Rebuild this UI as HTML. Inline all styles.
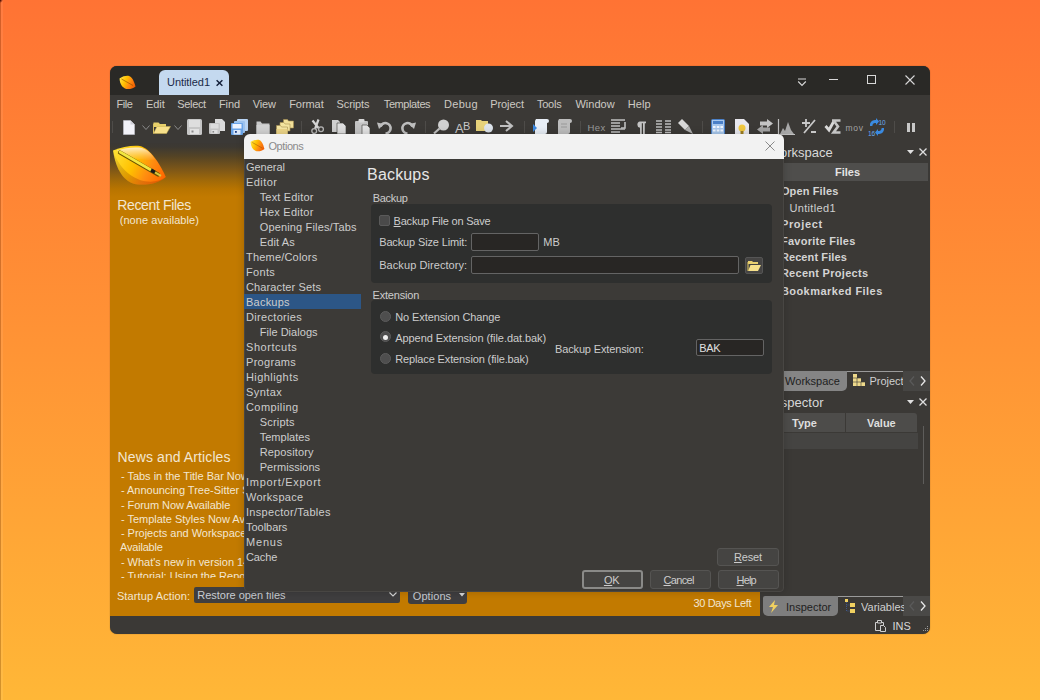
<!DOCTYPE html>
<html><head><meta charset="utf-8">
<style>
*{margin:0;padding:0;box-sizing:border-box}
html,body{width:1040px;height:700px;overflow:hidden}
body{background:linear-gradient(180deg,#ff7334 0%,#ff9435 50%,#ffb737 100%);font-family:"Liberation Sans",sans-serif;position:relative}
.a{position:absolute}
.t{position:absolute;white-space:nowrap;line-height:1}
svg{position:absolute;overflow:visible}
u{text-decoration:underline;text-underline-offset:1px}
</style></head><body>

<div class="a" style="left:0px;top:0px;width:1px;height:700px;background:rgba(60,20,0,0.22)"></div>
<div class="a" style="left:1px;top:0px;width:2px;height:700px;background:rgba(255,255,255,0.07)"></div>
<div class="a" style="left:0px;top:0px;width:3px;height:3px;background:radial-gradient(circle at 0 0,#300 0,rgba(60,0,0,0) 3px)"></div>
<div class="a" style="left:110px;top:66px;width:820px;height:567.5px;background:#3b3936;border-radius:7px;box-shadow:0 0 1px rgba(0,0,0,0.5)"></div>
<div class="a" style="left:110px;top:66px;width:820px;height:29px;background:#2a2926;border-radius:7px 7px 0 0"></div>
<div class="a" style="left:159px;top:70px;width:70px;height:25px;background:#c4d9ef;border-radius:6px 6px 0 0"></div>
<svg style="left:216px;top:80px" width="7" height="6" viewBox="0 0 7 6"><path d="M0.6 0.3l5.8 5.4M6.4 0.3l-5.8 5.4" stroke="#14203a" stroke-width="1.5"/></svg>
<svg style="left:119px;top:75px" width="17" height="15" viewBox="0 0 17 15"><defs>
<linearGradient id="lg1" x1="0" y1="0.3" x2="1" y2="0.7"><stop offset="0" stop-color="#ffe040"/><stop offset="0.35" stop-color="#ffc000"/><stop offset="0.65" stop-color="#ff8a10"/><stop offset="1" stop-color="#f05a00"/></linearGradient></defs>
<path d="M0.5 3.5 C4 1 8 0.5 10 1 C13 2 15 6 16.5 11.5 C13 14.5 8 14.5 6 13.5 C3 12 1 9 0.5 3.5Z" fill="url(#lg1)"/><path d="M2.5 4 L14 10.5" stroke="#905000" stroke-width="0.9" opacity="0.7"/></svg>
<svg style="left:797px;top:76px" width="10" height="11" viewBox="0 0 10 11"><path d="M1 3h8M1.2 5.5l3.8 4 3.8-4" stroke="#d8d8d8" stroke-width="1.1" fill="none"/></svg>
<div class="a" style="left:829px;top:79px;width:9px;height:1px;background:#d8d8d8"></div>
<div class="a" style="left:867px;top:75px;width:9px;height:9px;border:1px solid #d8d8d8"></div>
<svg style="left:905px;top:75px" width="10" height="10" viewBox="0 0 10 10"><path d="M0.5 0.5l9 9M9.5 0.5l-9 9" stroke="#d8d8d8" stroke-width="1.1"/></svg>
<div class="a" style="left:112px;top:121px;width:1px;height:12px;background:#4e4c49"></div>
<svg style="left:123px;top:120px" width="12" height="15" viewBox="0 0 12 15"><path d="M0.5 0.5h7l4 4v10h-11z" fill="#f2f2f8" stroke="#c8c8d0" stroke-width="0.6"/><path d="M7.5 0.5v4h4" fill="#d0d0d8"/></svg>
<svg style="left:142px;top:125px" width="8" height="6" viewBox="0 0 8 6"><path d="M0.5 0.5l3.5 4 3.5-4" stroke="#8a8a8a" fill="none" stroke-width="1"/></svg>
<svg style="left:153px;top:121px" width="18" height="13" viewBox="0 0 18 13"><path d="M0.5 1.5h5l1.5 1.5h6v3h-13z" fill="#e6cf6a"/><path d="M0.5 12.5l3.5-7h13.5l-4 7z" fill="#f7e08a" stroke="#c9b050" stroke-width="0.5"/><path d="M0.5 3v9.5" stroke="#d8c060"/></svg>
<svg style="left:174px;top:125px" width="8" height="6" viewBox="0 0 8 6"><path d="M0.5 0.5l3.5 4 3.5-4" stroke="#8a8a8a" fill="none" stroke-width="1"/></svg>
<svg style="left:187px;top:119px" width="15" height="16" viewBox="0 0 15 16"><rect x="0" y="0" width="15" height="16" rx="1.5" fill="#c6c6c6"/><rect x="2" y="1" width="11" height="7" fill="#dedede"/><rect x="3" y="10" width="9" height="5" fill="#e2e2e2"/><rect x="4.5" y="11.5" width="2" height="2" fill="#8a8a8a"/></svg>
<svg style="left:209px;top:119px" width="16" height="15" viewBox="0 0 16 15"><path d="M6 0h7l3 3v9h-10z" fill="#dadada"/><rect x="0" y="4" width="11" height="11" rx="1" fill="#c4c4c4"/><rect x="1.5" y="5" width="8" height="4.5" fill="#dcdcdc"/><rect x="2.5" y="11" width="6" height="3.5" fill="#e0e0e0"/><rect x="3.5" y="12" width="1.6" height="1.6" fill="#888"/></svg>
<svg style="left:231px;top:119px" width="17" height="16" viewBox="0 0 17 16"><rect x="6" y="0" width="11" height="12" rx="1" fill="#b8d4f4"/><rect x="3" y="2" width="11" height="12" rx="1" fill="#9cc2ee"/><rect x="0" y="4" width="12" height="12" rx="1" fill="#6aa4e8"/><rect x="1.5" y="5" width="9" height="4.5" fill="#eef4ff"/><rect x="2.5" y="11" width="7" height="4.5" fill="#dce8f8"/><rect x="4" y="12" width="1.8" height="1.8" fill="#1a3a80"/></svg>
<svg style="left:256px;top:121px" width="14" height="14" viewBox="0 0 14 14"><path d="M0.5 0.5h4l1.5 2h7.5v11h-13z" fill="#c8c8c8"/><rect x="0.5" y="4" width="13" height="9.5" fill="#d2d2d2"/></svg>
<svg style="left:276px;top:119px" width="18" height="16" viewBox="0 0 18 16"><path d="M7.5 0.5h4l1 1.5h5v7h-10z" fill="#f2e09a" stroke="#a89050" stroke-width="0.6"/><path d="M4 3.5h4l1 1.5h5v7h-10z" fill="#f4e4a0" stroke="#a89050" stroke-width="0.6"/><path d="M0.5 6.5h4l1 1.5h6v7.5h-11z" fill="#f6e6a4" stroke="#a89050" stroke-width="0.6"/><path d="M0.5 10h11v5.5h-11z" fill="#eed688"/></svg>
<div class="a" style="left:301px;top:121px;width:1px;height:12px;background:#4e4c49"></div>
<svg style="left:310px;top:119px" width="14" height="15" viewBox="0 0 14 15"><path d="M8.5 0.5l-3.5 9.5M2.5 1.5l6 7.5" stroke="#d4d4d4" stroke-width="2.2"/><circle cx="4.2" cy="12" r="2.4" fill="none" stroke="#b8b8b8" stroke-width="1.3"/><circle cx="11" cy="10.2" r="2.4" fill="none" stroke="#b8b8b8" stroke-width="1.3"/></svg>
<svg style="left:332px;top:120px" width="15" height="14" viewBox="0 0 15 14"><path d="M0 0h6l2 2v10h-8z" fill="#cfcfcf"/><path d="M5 3h6l3 3v8h-9z" fill="#dedede" stroke="#3b3936" stroke-width="0.6"/></svg>
<svg style="left:355px;top:119px" width="15" height="16" viewBox="0 0 15 16"><rect x="0" y="2" width="13" height="14" rx="1" fill="#c4c4c4"/><rect x="3.5" y="0" width="6" height="3.5" rx="1" fill="#d8d8d8"/><path d="M7 6h5l3 3v7h-8z" fill="#e2e2e2" stroke="#3b3936" stroke-width="0.6"/></svg>
<svg style="left:377px;top:120px" width="16" height="15" viewBox="0 0 16 15"><path d="M3.5 6.5 A5.2 5.2 0 1 1 8.5 13.5" stroke="#bdbdbd" stroke-width="2.6" fill="none"/><path d="M0 2.5l7 1.5-5 5z" fill="#bdbdbd"/></svg>
<svg style="left:400px;top:120px" width="16" height="15" viewBox="0 0 16 15"><path d="M12.5 6.5 A5.2 5.2 0 1 0 7.5 13.5" stroke="#bdbdbd" stroke-width="2.6" fill="none"/><path d="M16 2.5l-7 1.5 5 5z" fill="#bdbdbd"/></svg>
<div class="a" style="left:425px;top:121px;width:1px;height:12px;background:#4e4c49"></div>
<svg style="left:433px;top:119px" width="17" height="15" viewBox="0 0 17 15"><circle cx="10.5" cy="6" r="5.5" fill="#d0d0d0"/><path d="M6.5 9.5l-5.5 5" stroke="#c0c0c0" stroke-width="2.2"/></svg>
<svg style="left:455px;top:119px" width="17" height="15" viewBox="0 0 17 15"><text x="0" y="14" font-family="Liberation Sans" font-size="13" fill="#c8c8c8">A</text><text x="8" y="11" font-family="Liberation Sans" font-size="11" fill="#c8c8c8">B</text></svg>
<svg style="left:476px;top:119px" width="18" height="15" viewBox="0 0 18 15"><path d="M0 1h5l1 1h6v10h-12z" fill="#e6d27a"/><circle cx="12.5" cy="9" r="4.5" fill="#dde4ec"/></svg>
<svg style="left:500px;top:120px" width="14" height="12" viewBox="0 0 14 12"><path d="M0 6h11M6 1l6 5-6 5" stroke="#c0c0c0" stroke-width="2" fill="none"/></svg>
<div class="a" style="left:524px;top:121px;width:1px;height:12px;background:#4e4c49"></div>
<svg style="left:533px;top:119px" width="16" height="15" viewBox="0 0 16 15"><path d="M3 0h11a2 2 0 0 1 0 4v9a2 2 0 0 1-2 2h-10v-13z" fill="#e8eef6"/><path d="M0 5l4 4-4 4z" fill="#3a88e0"/></svg>
<svg style="left:557px;top:119px" width="15" height="15" viewBox="0 0 15 15"><path d="M2 0h11a2 2 0 0 1 0 4v9a2 2 0 0 1-2 2h-10v-13z" fill="#bdbdbd"/><path d="M4 5h6M4 8h6" stroke="#999" stroke-width="1"/></svg>
<div class="a" style="left:580px;top:121px;width:1px;height:12px;background:#4e4c49"></div>
<svg style="left:611px;top:119px" width="15" height="15" viewBox="0 0 15 15"><path d="M0 1h14M0 4h9M0 7h9M0 10h14M0 13h9" stroke="#c0c0c0" stroke-width="1.6"/><path d="M14 3v6h-4" stroke="#c0c0c0" stroke-width="1.6" fill="none"/></svg>
<svg style="left:635px;top:121px" width="11" height="13" viewBox="0 0 11 13"><path d="M5 0.5h6v1.8h-1.2v10.7h-1.8v-10.7h-1.2v10.7h-1.8v-6.2a3.2 3.2 0 0 1 0-6.3z" fill="#c4c4c4"/></svg>
<svg style="left:656px;top:120px" width="15" height="13" viewBox="0 0 15 13"><path d="M0 1h6M0 4h6M0 7h6M0 10h6M0 12.5h6M9 1h6M9 4h6M9 7h6M9 10h6M9 12.5h6" stroke="#bdbdbd" stroke-width="1.5"/></svg>
<svg style="left:677px;top:119px" width="16" height="15" viewBox="0 0 16 15"><path d="M1 4l4-4 7 7-4 4z" fill="#d8d8d8"/><path d="M8 11l4-4 4 8z" fill="#b0b0b0"/></svg>
<div class="a" style="left:702px;top:121px;width:1px;height:12px;background:#4e4c49"></div>
<svg style="left:711px;top:119px" width="14" height="16" viewBox="0 0 14 16"><rect x="0.5" y="0.5" width="13" height="15" rx="1" fill="#a8c8ec" stroke="#4a80c8"/><rect x="2" y="2" width="10" height="3" fill="#4a80c8"/><path d="M2 7h2.5v2h-2.5zM5.8 7h2.5v2h-2.5zM9.5 7h2.5v2h-2.5zM2 10.5h2.5v2h-2.5zM5.8 10.5h2.5v2h-2.5zM9.5 10.5h2.5v2h-2.5z" fill="#f0f6ff"/></svg>
<svg style="left:735px;top:119px" width="14" height="16" viewBox="0 0 14 16"><path d="M0 0h9l5 5v11h-14z" fill="#e8e8ee"/><circle cx="7" cy="9" r="3.5" fill="#f0c840"/><rect x="5.5" y="12" width="3" height="3" fill="#a08020"/></svg>
<svg style="left:757px;top:119px" width="16" height="15" viewBox="0 0 16 15"><path d="M3 2.5h7v-2.5l6 4.5-6 4.5v-2.5h-7z" fill="#c4c4c4"/><path d="M13 8.5h-7v-2.5l-6 4.5 6 4.5v-2.5h7z" fill="#a4a4a4"/></svg>
<svg style="left:778px;top:119px" width="17" height="16" viewBox="0 0 17 16"><path d="M0.5 0v15.5h16.5" stroke="#c0c0c0" stroke-width="1.2" fill="none"/><path d="M2 15l3-6 2 3 3-9 3 8 3 4z" fill="#a8a8a8"/></svg>
<svg style="left:802px;top:119px" width="15" height="15" viewBox="0 0 15 15"><path d="M4 0v8M0 4h8M2 14l11-13M9 13h5" stroke="#c8c8c8" stroke-width="1.8"/></svg>
<svg style="left:825px;top:119px" width="16" height="15" viewBox="0 0 16 15"><path d="M0.5 7l3.5 4 5-9" stroke="#d8d8d8" stroke-width="2.8" fill="none"/><path d="M7 1.5h8.5M8.5 1.5l4.5 6-4.5 6h7" stroke="#c4c4c4" stroke-width="2.6" fill="none"/></svg>
<svg style="left:868px;top:118px" width="18" height="18" viewBox="0 0 18 18"><path d="M2 8a5 5 0 0 1 5-6h1v-2l3 3.5-3 3.5v-2h-1a2.6 2.6 0 0 0-2.6 3z" fill="#3a8ae0"/><path d="M16 10a5 5 0 0 1-5 6h-1v2l-3-3.5 3-3.5v2h1a2.6 2.6 0 0 0 2.6-3z" fill="#3a8ae0"/><text x="10.5" y="6.5" font-family="Liberation Sans" font-size="6.5" fill="#6aaaf0">10</text><text x="0" y="17.5" font-family="Liberation Sans" font-size="6.5" fill="#6aaaf0">16</text></svg>
<div class="a" style="left:894px;top:121px;width:1px;height:12px;background:#4e4c49"></div>
<div class="a" style="left:907px;top:123px;width:3px;height:9px;background:#c8c8c8"></div>
<div class="a" style="left:912px;top:123px;width:3px;height:9px;background:#c8c8c8"></div>
<div class="a" style="left:110px;top:143px;width:650px;height:473px;background:linear-gradient(180deg,#3b3834 0px,#3d3932 4px,#564424 14px,#7c5618 26px,#a26a08 38px,#b87400 46px,#c27a00 54px,#c27a00 100%)"></div>
<svg style="left:112px;top:144px" width="56" height="44" viewBox="0 0 56 44"><defs>
<linearGradient id="lg2" x1="0" y1="0.3" x2="1" y2="0.7"><stop offset="0" stop-color="#ffe030"/><stop offset="0.4" stop-color="#ffc000"/><stop offset="0.7" stop-color="#ff8c10"/><stop offset="1" stop-color="#ff6800"/></linearGradient>
<linearGradient id="lg3" x1="0" y1="0" x2="0" y2="1"><stop offset="0" stop-color="#fff4e0" stop-opacity="0.9"/><stop offset="1" stop-color="#ffc890" stop-opacity="0.1"/></linearGradient>
<linearGradient id="lg4" x1="0" y1="0" x2="0" y2="1"><stop offset="0" stop-color="#000" stop-opacity="0"/><stop offset="1" stop-color="#b04000" stop-opacity="0.35"/></linearGradient></defs>
<path d="M1 6.5 C9 3 18 1.5 26 1.8 C36 2.5 46 16 53.8 33 C46 40 33 41.5 24 40.2 C12 38 4 26 1 6.5Z" fill="url(#lg2)"/>
<path d="M1 6.5 C12 38 40 43 53.8 33 C46 40 33 41.5 24 40.2 C12 38 4 26 1 6.5Z" fill="url(#lg4)"/>
<path d="M5 6.5 C12 4 20 3 27 3.5 C35 4.5 40 10 43 15.5 C30 17 15 14 5 6.5Z" fill="url(#lg3)"/>
<path d="M8 8.5 L46 30.5" stroke="#6a5200" stroke-width="4.2" stroke-linecap="round"/>
<path d="M8 8 L39 26" stroke="#f2e640" stroke-width="2.8" stroke-linecap="round"/>
<path d="M39 26 L43 28.3" stroke="#1a1a1a" stroke-width="3.2"/>
<path d="M43 28.3 L49 31.8" stroke="#d8c840" stroke-width="2"/>
</svg>
<div class="a" style="left:194px;top:587px;width:206px;height:16px;background:#3f3e3f;border-radius:2px"></div>
<svg style="left:389px;top:592px" width="8" height="5" viewBox="0 0 8 5"><path d="M0.5 0.5l3.5 3.5 3.5-3.5" stroke="#d8d8d8" fill="none" stroke-width="1.1"/></svg>
<div class="a" style="left:408px;top:587px;width:59px;height:17px;background:#3f3e40;border-radius:3px"></div>
<svg style="left:459px;top:593px" width="6" height="4" viewBox="0 0 6 4"><path d="M0 0h6l-3 3.5z" fill="#d8d8d8"/></svg>
<div class="a" style="left:760px;top:143px;width:170px;height:473px;background:#3b3936"></div>
<svg style="left:907px;top:150px" width="7" height="5" viewBox="0 0 7 5"><path d="M0 0h7l-3.5 4z" fill="#e0e0e0"/></svg>
<svg style="left:919px;top:148px" width="8" height="8" viewBox="0 0 8 8"><path d="M0.5 0.5l7 7M7.5 0.5l-7 7" stroke="#e0e0e0" stroke-width="1.3"/></svg>
<div class="a" style="left:760px;top:163px;width:168px;height:18px;background:#4f4e4c"></div>
<div class="a" style="left:760px;top:371px;width:170px;height:20px;background:#3b3936"></div>
<div class="a" style="left:847px;top:371px;width:56px;height:1px;background:#9a9a9a"></div>
<div class="a" style="left:760px;top:371px;width:87px;height:20px;background:#858585;border-radius:0 0 5px 0"></div>
<svg style="left:853px;top:374px" width="12" height="12" viewBox="0 0 12 12"><path d="M0 0h4v4h4v4h4v4h-12z" fill="#eed98a"/><path d="M0 4h12M0 8h12M4 4v8M8 8v4" stroke="#3b3936" stroke-width="0.6"/></svg>
<div class="a" style="left:903px;top:371px;width:27px;height:20px;background:#464543"></div>
<svg style="left:909px;top:376px" width="6" height="10" viewBox="0 0 6 10"><path d="M5 0.5l-4 4.5 4 4.5" stroke="#5a5a5a" stroke-width="1.3" fill="none"/></svg>
<svg style="left:920px;top:376px" width="6" height="10" viewBox="0 0 6 10"><path d="M1 0.5l4 4.5-4 4.5" stroke="#e8e8e8" stroke-width="1.3" fill="none"/></svg>
<svg style="left:907px;top:400px" width="7" height="5" viewBox="0 0 7 5"><path d="M0 0h7l-3.5 4z" fill="#e0e0e0"/></svg>
<svg style="left:919px;top:398px" width="8" height="8" viewBox="0 0 8 8"><path d="M0.5 0.5l7 7M7.5 0.5l-7 7" stroke="#e0e0e0" stroke-width="1.3"/></svg>
<div class="a" style="left:760px;top:413px;width:85px;height:19px;background:#4d4c4a;border-radius:0"></div>
<div class="a" style="left:846px;top:413px;width:71px;height:19px;background:#4d4c4a;border-radius:0 3px 0 0"></div>
<div class="a" style="left:760px;top:433px;width:158px;height:16px;background:#454442"></div>
<div class="a" style="left:923px;top:426px;width:1px;height:58px;background:#5e5d5b"></div>
<div class="a" style="left:760px;top:596px;width:170px;height:20px;background:#3b3936"></div>
<div class="a" style="left:838px;top:596px;width:65px;height:1px;background:#9a9a9a"></div>
<div class="a" style="left:763px;top:596px;width:75px;height:20px;background:#7e7e7e;border-radius:2px 0 5px 5px"></div>
<svg style="left:769px;top:600px" width="9" height="13" viewBox="0 0 9 13"><path d="M6 0l-6 7h4l-2 6 7-8h-4z" fill="#f0d060"/></svg>
<svg style="left:845px;top:599px" width="11" height="15" viewBox="0 0 11 15"><path d="M0 0h3v3h-3zM5 4h5v4h-5zM5 10h5v4h-5z" fill="#f0d060"/><path d="M1.5 3v9h3.5M1.5 6h3.5" stroke="#4060a0" stroke-width="0.8" stroke-dasharray="1 1" fill="none"/></svg>
<div class="a" style="left:903px;top:596px;width:27px;height:20px;background:#4a4947"></div>
<svg style="left:909px;top:601px" width="6" height="10" viewBox="0 0 6 10"><path d="M5 0.5l-4 4.5 4 4.5" stroke="#5a5a5a" stroke-width="1.3" fill="none"/></svg>
<svg style="left:920px;top:601px" width="6" height="10" viewBox="0 0 6 10"><path d="M1 0.5l4 4.5-4 4.5" stroke="#e8e8e8" stroke-width="1.3" fill="none"/></svg>
<svg style="left:875px;top:620px" width="12" height="12" viewBox="0 0 12 12"><path d="M0.5 2.5h8v8h-8z" fill="none" stroke="#d0d0d0"/><path d="M2.5 0.5h4v2.5h-4z" fill="#3b3936" stroke="#d0d0d0"/><path d="M5.5 5.5h3l2 2v4h-5z" fill="#3b3936" stroke="#d0d0d0"/></svg>
<svg style="left:922px;top:626px" width="7" height="7" viewBox="0 0 7 7"><path d="M5 0h1v1h-1zM3 2h1v1h-1zM5 2h1v1h-1zM1 4h1v1h-1zM3 4h1v1h-1zM5 4h1v1h-1z" fill="#9a9a9a"/></svg>
<div style="position:absolute;left:0;top:0;width:1040px;height:700px;z-index:10">
<div class="a" style="left:244px;top:134px;width:540px;height:458px;background:#3c3a37;border:1px solid #484643;border-radius:6px 6px 4px 4px;box-shadow:0 0 8px rgba(0,0,0,0.18)"></div>
<div class="a" style="left:244px;top:134px;width:540px;height:25px;background:#f2f2f2;border-radius:6px 6px 0 0"></div>
<svg style="left:250px;top:139px" width="15" height="13" viewBox="0 0 17 15"><path d="M0.5 3.5 C4 1 8 0.5 10 1 C13 2 15 6 16.5 11.5 C13 14.5 8 14.5 6 13.5 C3 12 1 9 0.5 3.5Z" fill="url(#lg1)"/><path d="M2.5 4 L14 10.5" stroke="#905000" stroke-width="0.9" opacity="0.6"/></svg>
<svg style="left:765px;top:141px" width="10" height="10" viewBox="0 0 10 10"><path d="M0.5 0.5l9 9M9.5 0.5l-9 9" stroke="#8a8a8a" stroke-width="1"/></svg>
<div class="a" style="left:244px;top:294px;width:117px;height:15px;background:#2c5686"></div>
<div class="a" style="left:371px;top:204px;width:401px;height:79px;background:#2e2f2e;border-radius:4px"></div>
<div class="a" style="left:379px;top:215px;width:11px;height:11px;background:#4a4a4a;border:1px solid #5a5a5a;border-radius:2px"></div>
<div class="a" style="left:471px;top:233px;width:68px;height:18px;background:#282624;border:1px solid #646464;border-radius:2px"></div>
<div class="a" style="left:471px;top:256px;width:268px;height:18px;background:#282624;border:1px solid #646464;border-radius:2px"></div>
<div class="a" style="left:745px;top:257px;width:18px;height:17px;background:#454443;border:1px solid #555;border-radius:2px"></div>
<svg style="left:748px;top:261px" width="13" height="10" viewBox="0 0 13 10"><path d="M0 0h4l1 1h5v2h-10z" fill="#e8d070"/><path d="M0 10l2.5-6h10.5l-3 6z" fill="#f6e08a"/><path d="M0 1v9" stroke="#e0c860"/></svg>
<div class="a" style="left:371px;top:300px;width:401px;height:74px;background:#2e2f2e;border-radius:4px"></div>
<div class="a" style="left:380px;top:311px;width:11px;height:11px;background:#4e4e4e;border:1px solid #5c5c5c;border-radius:50%"></div>
<div class="a" style="left:380px;top:331px;width:11px;height:11px;background:#4e4e4e;border:1px solid #5c5c5c;border-radius:50%"></div>
<div class="a" style="left:380px;top:353px;width:11px;height:11px;background:#4e4e4e;border:1px solid #5c5c5c;border-radius:50%"></div>
<div class="a" style="left:383px;top:335px;width:5px;height:5px;background:#f0f0f0;border-radius:50%"></div>
<div class="a" style="left:696px;top:339px;width:68px;height:17px;background:#282624;border:1px solid #646464;border-radius:2px"></div>
<div class="a" style="left:717px;top:548px;width:62px;height:18px;background:#454442;border:1px solid #555452;border-radius:3px"></div>
<div class="a" style="left:582px;top:570px;width:61px;height:19px;background:#454442;border:2px solid #8a8a88;border-radius:3px"></div>
<div class="a" style="left:650px;top:570px;width:61px;height:19px;background:#454442;border:1px solid #555452;border-radius:3px"></div>
<div class="a" style="left:718px;top:570px;width:61px;height:19px;background:#454442;border:1px solid #555452;border-radius:3px"></div>
</div>
<div style="position:absolute;left:0;top:0;width:1040px;height:578px;overflow:hidden;z-index:1">
<span class="t" id="n0" style="left:120.90px;top:470.99px;font-size:11px;color:#f3e6d0;letter-spacing:-0.010px;z-index:1;">- Tabs in the Title Bar Now Available</span>
<span class="t" id="n1" style="left:120.90px;top:485.26px;font-size:11px;color:#f3e6d0;letter-spacing:-0.010px;z-index:1;">- Announcing Tree-Sitter Syntax Highlighting</span>
<span class="t" id="n2" style="left:120.90px;top:499.53px;font-size:11px;color:#f3e6d0;letter-spacing:-0.050px;z-index:1;">- Forum Now Available</span>
<span class="t" id="n3" style="left:120.90px;top:513.80px;font-size:11px;color:#f3e6d0;letter-spacing:-0.010px;z-index:1;">- Template Styles Now Available</span>
<span class="t" id="n4" style="left:120.90px;top:528.07px;font-size:11px;color:#f3e6d0;letter-spacing:-0.010px;z-index:1;">- Projects and Workspaces Now</span>
<span class="t" id="n5" style="left:120.10px;top:542.34px;font-size:11px;color:#f3e6d0;letter-spacing:-0.215px;z-index:1;">Available</span>
<span class="t" id="n6" style="left:120.90px;top:556.61px;font-size:11px;color:#f3e6d0;letter-spacing:-0.010px;z-index:1;">- What's new in version 14</span>
<span class="t" id="n7" style="left:120.90px;top:570.88px;font-size:11px;color:#f3e6d0;letter-spacing:-0.010px;z-index:1;">- Tutorial: Using the Repository</span>
</div>
<span class="t" id="m0" style="left:116.40px;top:99.19px;font-size:11px;color:#cdc9c3;letter-spacing:-0.435px;z-index:1;">File</span>
<span class="t" id="m1" style="left:145.90px;top:99.19px;font-size:11px;color:#cdc9c3;letter-spacing:-0.034px;z-index:1;">Edit</span>
<span class="t" id="m2" style="left:177.30px;top:99.19px;font-size:11px;color:#cdc9c3;letter-spacing:-0.355px;z-index:1;">Select</span>
<span class="t" id="m3" style="left:219.00px;top:99.19px;font-size:11px;color:#cdc9c3;letter-spacing:-0.102px;z-index:1;">Find</span>
<span class="t" id="m4" style="left:252.70px;top:99.19px;font-size:11px;color:#cdc9c3;letter-spacing:-0.120px;z-index:1;">View</span>
<span class="t" id="m5" style="left:289.20px;top:99.19px;font-size:11px;color:#cdc9c3;letter-spacing:-0.057px;z-index:1;">Format</span>
<span class="t" id="m6" style="left:336.50px;top:99.19px;font-size:11px;color:#cdc9c3;letter-spacing:-0.089px;z-index:1;">Scripts</span>
<span class="t" id="m7" style="left:383.80px;top:99.19px;font-size:11px;color:#cdc9c3;letter-spacing:-0.418px;z-index:1;">Templates</span>
<span class="t" id="m8" style="left:444.10px;top:99.19px;font-size:11px;color:#cdc9c3;letter-spacing:0.277px;z-index:1;">Debug</span>
<span class="t" id="m9" style="left:490.20px;top:99.19px;font-size:11px;color:#cdc9c3;letter-spacing:-0.073px;z-index:1;">Project</span>
<span class="t" id="m10" style="left:537.00px;top:99.19px;font-size:11px;color:#cdc9c3;letter-spacing:-0.257px;z-index:1;">Tools</span>
<span class="t" id="m11" style="left:575.40px;top:99.19px;font-size:11px;color:#cdc9c3;letter-spacing:0.029px;z-index:1;">Window</span>
<span class="t" id="m12" style="left:627.80px;top:99.19px;font-size:11px;color:#cdc9c3;letter-spacing:0.094px;z-index:1;">Help</span>
<span class="t" id="rf" style="left:117.20px;top:198.35px;font-size:14px;color:#f3e6d0;letter-spacing:-0.350px;z-index:1;">Recent Files</span>
<span class="t" id="na" style="left:119.70px;top:215.29px;font-size:11px;color:#f3e6d0;letter-spacing:0.057px;z-index:1;">(none available)</span>
<span class="t" id="news" style="left:117.60px;top:450.15px;font-size:14px;color:#f3e6d0;letter-spacing:0.101px;z-index:1;">News and Articles</span>
<span class="t" id="sa" style="left:116.90px;top:591.39px;font-size:11px;color:#f3e6d0;letter-spacing:0.110px;z-index:1;">Startup Action:</span>
<span class="t" id="rof" style="left:197.30px;top:590.49px;font-size:11px;color:#c8ccd2;letter-spacing:-0.024px;z-index:1;">Restore open files</span>
<span class="t" id="optb" style="left:412.80px;top:590.89px;font-size:11px;color:#c8ccd2;letter-spacing:0.063px;z-index:1;">Options</span>
<span class="t" id="dl" style="left:693.40px;top:597.59px;font-size:11px;color:#f3e6d0;letter-spacing:-0.321px;z-index:1;">30 Days Left</span>
<span class="t" id="ev" style="left:663.00px;top:582.79px;font-size:11px;color:#f3e6d0;z-index:1;">Evaluation Version</span>
<span class="t" id="li0" style="left:246.00px;top:162.19px;font-size:11px;color:#cdcdcd;letter-spacing:-0.028px;z-index:11;">General</span>
<span class="t" id="li1" style="left:246.00px;top:177.19px;font-size:11px;color:#cdcdcd;letter-spacing:0.445px;z-index:11;">Editor</span>
<span class="t" id="li2" style="left:259.70px;top:192.19px;font-size:11px;color:#cdcdcd;letter-spacing:0.174px;z-index:11;">Text Editor</span>
<span class="t" id="li3" style="left:259.70px;top:207.19px;font-size:11px;color:#cdcdcd;letter-spacing:0.252px;z-index:11;">Hex Editor</span>
<span class="t" id="li4" style="left:259.70px;top:222.19px;font-size:11px;color:#cdcdcd;letter-spacing:0.157px;z-index:11;">Opening Files/Tabs</span>
<span class="t" id="li5" style="left:259.70px;top:237.19px;font-size:11px;color:#cdcdcd;letter-spacing:0.123px;z-index:11;">Edit As</span>
<span class="t" id="li6" style="left:246.00px;top:252.19px;font-size:11px;color:#cdcdcd;letter-spacing:0.195px;z-index:11;">Theme/Colors</span>
<span class="t" id="li7" style="left:246.00px;top:267.19px;font-size:11px;color:#cdcdcd;letter-spacing:0.326px;z-index:11;">Fonts</span>
<span class="t" id="li8" style="left:246.00px;top:282.19px;font-size:11px;color:#cdcdcd;letter-spacing:0.117px;z-index:11;">Character Sets</span>
<span class="t" id="li9" style="left:246.00px;top:297.19px;font-size:11px;color:#cdcdcd;letter-spacing:0.224px;z-index:11;">Backups</span>
<span class="t" id="li10" style="left:246.00px;top:312.19px;font-size:11px;color:#cdcdcd;letter-spacing:0.322px;z-index:11;">Directories</span>
<span class="t" id="li11" style="left:259.70px;top:327.19px;font-size:11px;color:#cdcdcd;letter-spacing:0.034px;z-index:11;">File Dialogs</span>
<span class="t" id="li12" style="left:246.00px;top:342.19px;font-size:11px;color:#cdcdcd;letter-spacing:0.549px;z-index:11;">Shortcuts</span>
<span class="t" id="li13" style="left:246.00px;top:357.19px;font-size:11px;color:#cdcdcd;letter-spacing:0.307px;z-index:11;">Programs</span>
<span class="t" id="li14" style="left:246.00px;top:372.19px;font-size:11px;color:#cdcdcd;letter-spacing:0.427px;z-index:11;">Highlights</span>
<span class="t" id="li15" style="left:246.00px;top:387.19px;font-size:11px;color:#cdcdcd;letter-spacing:0.442px;z-index:11;">Syntax</span>
<span class="t" id="li16" style="left:246.00px;top:402.19px;font-size:11px;color:#cdcdcd;letter-spacing:0.411px;z-index:11;">Compiling</span>
<span class="t" id="li17" style="left:259.70px;top:417.19px;font-size:11px;color:#cdcdcd;letter-spacing:0.212px;z-index:11;">Scripts</span>
<span class="t" id="li18" style="left:259.70px;top:432.19px;font-size:11px;color:#cdcdcd;letter-spacing:0.016px;z-index:11;">Templates</span>
<span class="t" id="li19" style="left:259.70px;top:447.19px;font-size:11px;color:#cdcdcd;letter-spacing:0.131px;z-index:11;">Repository</span>
<span class="t" id="li20" style="left:259.70px;top:462.19px;font-size:11px;color:#cdcdcd;letter-spacing:0.053px;z-index:11;">Permissions</span>
<span class="t" id="li21" style="left:246.00px;top:477.19px;font-size:11px;color:#cdcdcd;letter-spacing:0.717px;z-index:11;">Import/Export</span>
<span class="t" id="li22" style="left:246.00px;top:492.19px;font-size:11px;color:#cdcdcd;letter-spacing:0.283px;z-index:11;">Workspace</span>
<span class="t" id="li23" style="left:246.00px;top:507.19px;font-size:11px;color:#cdcdcd;letter-spacing:0.294px;z-index:11;">Inspector/Tables</span>
<span class="t" id="li24" style="left:246.00px;top:522.19px;font-size:11px;color:#cdcdcd;letter-spacing:-0.029px;z-index:11;">Toolbars</span>
<span class="t" id="li25" style="left:246.00px;top:537.19px;font-size:11px;color:#cdcdcd;letter-spacing:0.800px;z-index:11;">Menus</span>
<span class="t" id="li26" style="left:246.00px;top:552.19px;font-size:11px;color:#cdcdcd;letter-spacing:-0.112px;z-index:11;">Cache</span>
<span class="t" id="opt" style="left:268.50px;top:141.09px;font-size:11px;color:#8a8a8a;letter-spacing:-0.442px;z-index:11;">Options</span>
<span class="t" id="hd" style="left:367.10px;top:167.06px;font-size:16px;color:#e6e6e6;letter-spacing:0.161px;z-index:11;">Backups</span>
<span class="t" id="g1" style="left:372.70px;top:193.09px;font-size:11px;color:#cccccc;letter-spacing:-0.316px;z-index:11;">Backup</span>
<span class="t" id="cb" style="left:393.60px;top:215.99px;font-size:11px;color:#cccccc;letter-spacing:-0.217px;z-index:11;"><u>B</u>ackup File on Save</span>
<span class="t" id="bsl" style="left:379.20px;top:237.19px;font-size:11px;color:#cccccc;letter-spacing:-0.141px;z-index:11;">Backup Size Limit:</span>
<span class="t" id="mb" style="left:543.20px;top:237.19px;font-size:11px;color:#cccccc;letter-spacing:0.100px;z-index:11;">MB</span>
<span class="t" id="bd" style="left:379.20px;top:260.49px;font-size:11px;color:#cccccc;letter-spacing:0.074px;z-index:11;">Backup Directory:</span>
<span class="t" id="g2" style="left:372.50px;top:289.59px;font-size:11px;color:#cccccc;letter-spacing:-0.188px;z-index:11;">Extension</span>
<span class="t" id="r1" style="left:395.20px;top:311.99px;font-size:11px;color:#cccccc;letter-spacing:-0.095px;z-index:11;">No Extension Change</span>
<span class="t" id="r2" style="left:395.20px;top:332.79px;font-size:11px;color:#cccccc;letter-spacing:-0.062px;z-index:11;">Append Extension (file.dat.bak)</span>
<span class="t" id="r3" style="left:395.20px;top:353.89px;font-size:11px;color:#cccccc;letter-spacing:-0.131px;z-index:11;">Replace Extension (file.bak)</span>
<span class="t" id="be" style="left:555.00px;top:343.59px;font-size:11px;color:#cccccc;letter-spacing:-0.140px;z-index:11;">Backup Extension:</span>
<span class="t" id="bak" style="left:699.30px;top:342.89px;font-size:11px;color:#e0e0e0;letter-spacing:-0.300px;z-index:11;">BAK</span>
<span class="t" id="b_reset" style="left:734.00px;top:552.09px;font-size:11px;color:#cccccc;letter-spacing:-0.150px;z-index:11;"><u>R</u>eset</span>
<span class="t" id="b_ok" style="left:603.90px;top:574.59px;font-size:11px;color:#cccccc;letter-spacing:-0.200px;z-index:11;"><u>O</u>K</span>
<span class="t" id="b_cancel" style="left:663.50px;top:574.59px;font-size:11px;color:#cccccc;letter-spacing:-0.647px;z-index:11;"><u>C</u>ancel</span>
<span class="t" id="b_help" style="left:736.50px;top:574.59px;font-size:11px;color:#cccccc;letter-spacing:-0.800px;z-index:11;"><u>H</u>elp</span>
<span class="t" id="ws" style="left:768.00px;top:145.70px;font-size:13px;color:#d8d8d8;z-index:1;">Workspace</span>
<span class="t" id="files" style="left:835.00px;top:167.09px;font-size:11px;color:#e4e4e4;font-weight:bold;z-index:1;">Files</span>
<span class="t" id="d0" style="left:780.90px;top:186.19px;font-size:11px;color:#d4d4d4;font-weight:bold;letter-spacing:0.136px;z-index:1;">Open Files</span>
<span class="t" id="d1" style="left:789.40px;top:203.29px;font-size:11px;color:#cfcfcf;letter-spacing:0.355px;z-index:1;">Untitled1</span>
<span class="t" id="d2" style="left:780.90px;top:218.69px;font-size:11px;color:#d4d4d4;font-weight:bold;letter-spacing:0.655px;z-index:1;">Project</span>
<span class="t" id="d3" style="left:780.90px;top:235.89px;font-size:11px;color:#d4d4d4;font-weight:bold;letter-spacing:0.271px;z-index:1;">Favorite Files</span>
<span class="t" id="d4" style="left:780.90px;top:252.09px;font-size:11px;color:#d4d4d4;font-weight:bold;letter-spacing:0.099px;z-index:1;">Recent Files</span>
<span class="t" id="d5" style="left:780.90px;top:268.39px;font-size:11px;color:#d4d4d4;font-weight:bold;letter-spacing:0.285px;z-index:1;">Recent Projects</span>
<span class="t" id="d6" style="left:780.90px;top:285.59px;font-size:11px;color:#d4d4d4;font-weight:bold;letter-spacing:0.441px;z-index:1;">Bookmarked Files</span>
<span class="t" id="tws" style="left:785.10px;top:376.19px;font-size:11px;color:#1e1e1e;z-index:1;">Workspace</span>
<span class="t" id="tpr" style="left:869.40px;top:376.19px;font-size:11px;color:#d0d0d0;width:33.6px;overflow:hidden;z-index:1;">Project</span>
<span class="t" id="insp" style="left:770.00px;top:396.30px;font-size:13px;color:#d8d8d8;z-index:1;">Inspector</span>
<span class="t" id="typ" style="left:792.00px;top:418.09px;font-size:11px;color:#dedede;font-weight:bold;z-index:1;">Type</span>
<span class="t" id="val" style="left:867.00px;top:418.09px;font-size:11px;color:#dedede;font-weight:bold;z-index:1;">Value</span>
<span class="t" id="tin" style="left:786.00px;top:602.09px;font-size:11px;color:#1e1e1e;z-index:1;">Inspector</span>
<span class="t" id="tva" style="left:861.00px;top:602.49px;font-size:11px;color:#d0d0d0;width:42.6px;overflow:hidden;z-index:1;">Variables</span>
<span class="t" id="ins" style="left:892.40px;top:620.59px;font-size:11px;color:#d8d8d8;z-index:1;">INS</span>
<span class="t" id="tab" style="left:167.00px;top:77.39px;font-size:11px;color:#1b2a48;letter-spacing:-0.051px;z-index:1;">Untitled1</span>
<span class="t" id="hex" style="left:587.50px;top:122.86px;font-size:9.5px;color:#9a9a9a;letter-spacing:0.4px;z-index:1;">Hex</span>
<span class="t" id="mov" style="left:845.60px;top:124.30px;font-size:8.5px;color:#a4a4a4;letter-spacing:0.7px;z-index:1;">mov</span>
</body></html>
